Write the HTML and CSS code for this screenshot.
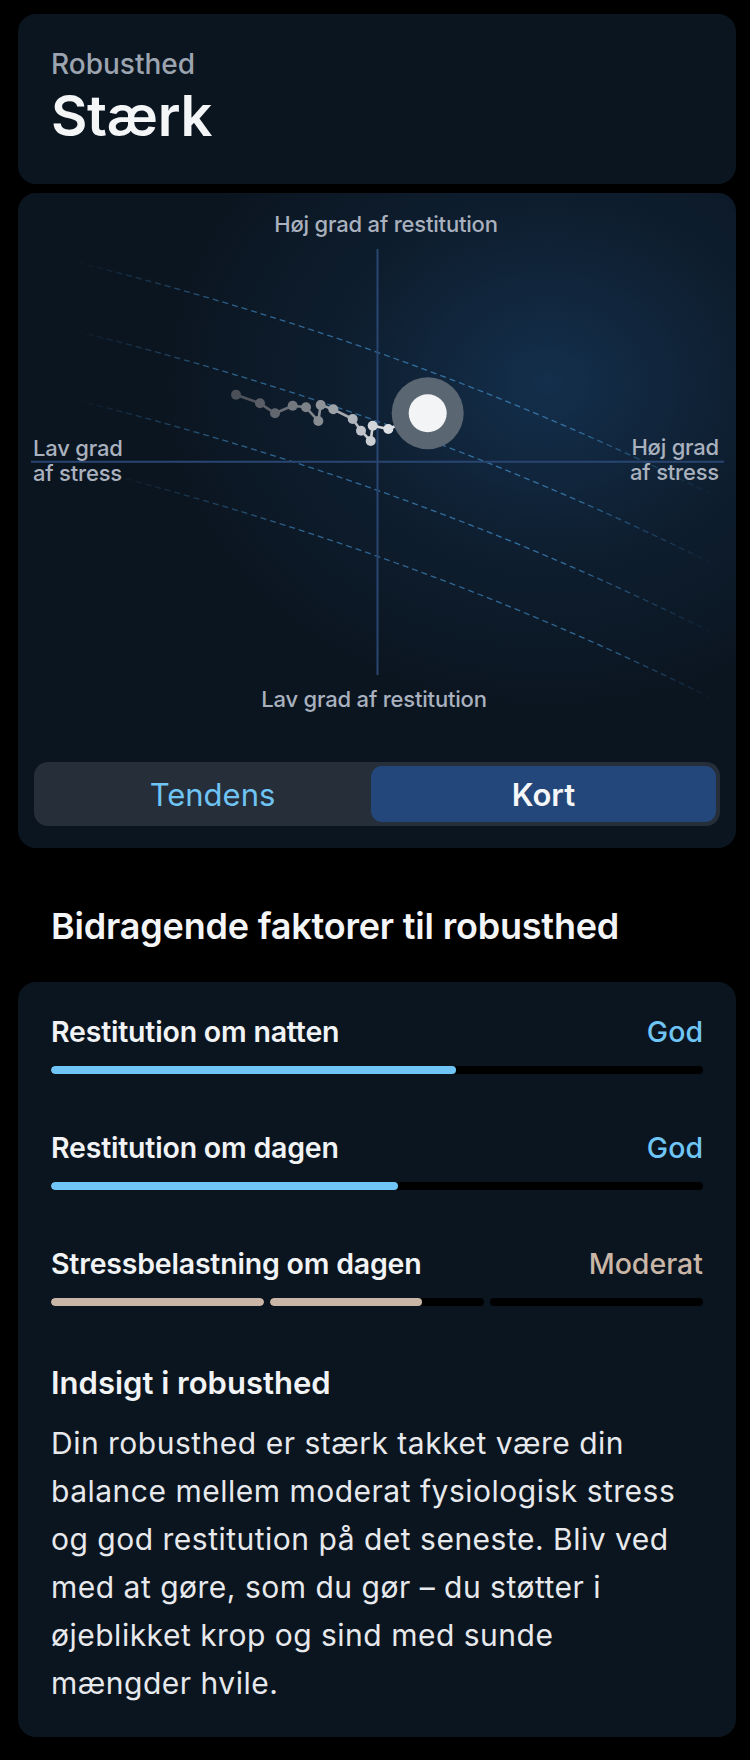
FILE: index.html
```html
<!DOCTYPE html>
<html lang="da">
<head>
<meta charset="utf-8">
<title>Robusthed</title>
<link rel="stylesheet" href="styles.css">
</head>
<body>
<main class="page">
  <section class="card summary">
    <div class="summary-label">Robusthed</div>
    <div class="summary-value">Stærk</div>
  </section>

  <section class="card chart-card">
    <div class="chart">
      <svg class="chart-svg" viewBox="0 0 718 569" width="718" height="569" aria-hidden="true">
        <defs>
          <linearGradient id="fade" gradientUnits="userSpaceOnUse" x1="55" y1="0" x2="705" y2="0">
            <stop offset="0" stop-color="#3f8ac4" stop-opacity="0"/>
            <stop offset="0.25" stop-color="#3f8ac4" stop-opacity="0.65"/>
            <stop offset="0.75" stop-color="#3f8ac4" stop-opacity="0.75"/>
            <stop offset="1" stop-color="#3f8ac4" stop-opacity="0"/>
          </linearGradient>
          <linearGradient id="fade4" gradientUnits="userSpaceOnUse" x1="95" y1="0" x2="700" y2="0">
            <stop offset="0" stop-color="#3f8ac4" stop-opacity="0"/>
            <stop offset="0.3" stop-color="#3f8ac4" stop-opacity="0.65"/>
            <stop offset="0.8" stop-color="#3f8ac4" stop-opacity="0.7"/>
            <stop offset="1" stop-color="#3f8ac4" stop-opacity="0"/>
          </linearGradient>
        </defs>
        <g fill="none" stroke-width="1.3" stroke-dasharray="6 4">
          <path stroke="url(#fade)" d="M50 67 C264 120 477 193 691 300"/>
          <path stroke="url(#fade)" d="M50 136 C264 189 477 262 691 369"/>
          <path stroke="url(#fade)" d="M50 205 C264 258 477 331 691 438"/>
          <path stroke="url(#fade4)" d="M50 271 C264 324 477 397 691 504"/>
        </g>
        <g stroke="#284671" stroke-width="2">
          <line x1="359.5" y1="56" x2="359.5" y2="482"/>
          <line x1="13" y1="268.7" x2="706" y2="268.7"/>
        </g>
        <g stroke-width="2.6" stroke-linecap="round">
          <line x1="218" y1="201.7" x2="242" y2="210.3" stroke="#4f545c"/>
          <line x1="242" y1="210.3" x2="257" y2="220.3" stroke="#5c6169"/>
          <line x1="257" y1="220.3" x2="274.7" y2="212.7" stroke="#686d75"/>
          <line x1="274.7" y1="212.7" x2="288" y2="214.3" stroke="#777c83"/>
          <line x1="288" y1="214.3" x2="300.3" y2="228" stroke="#81868d"/>
          <line x1="300.3" y1="228" x2="302.7" y2="212" stroke="#8a8f96"/>
          <line x1="302.7" y1="212" x2="315.3" y2="216.3" stroke="#959aa1"/>
          <line x1="315.3" y1="216.3" x2="334.7" y2="226" stroke="#a6abb1"/>
          <line x1="334.7" y1="226" x2="343" y2="237.7" stroke="#b7bbc1"/>
          <line x1="343" y1="237.7" x2="352.7" y2="248" stroke="#c4c8cd"/>
          <line x1="352.7" y1="248" x2="354.7" y2="232.7" stroke="#cdd0d5"/>
          <line x1="354.7" y1="232.7" x2="370.3" y2="236" stroke="#d6d9dd"/>
          <line x1="370.3" y1="236" x2="409.7" y2="220.3" stroke="#e6e8eb"/>
        </g>
        <circle cx="409.7" cy="220.3" r="36" fill="#5a6671"/>
        <circle cx="409.7" cy="220.3" r="19" fill="#f3f4f6"/>
        <g>
          <circle cx="218" cy="201.7" r="5" fill="#4b5058"/>
          <circle cx="242" cy="210.3" r="5" fill="#5a5f67"/>
          <circle cx="257" cy="220.3" r="5" fill="#62676f"/>
          <circle cx="274.7" cy="212.7" r="5" fill="#73787f"/>
          <circle cx="288" cy="214.3" r="5" fill="#7d8289"/>
          <circle cx="300.3" cy="228" r="5" fill="#878c93"/>
          <circle cx="302.7" cy="212" r="5" fill="#8e939a"/>
          <circle cx="315.3" cy="216.3" r="5" fill="#9da2a9"/>
          <circle cx="334.7" cy="226" r="5" fill="#b0b5bb"/>
          <circle cx="343" cy="237.7" r="5" fill="#bfc3c9"/>
          <circle cx="352.7" cy="248" r="5" fill="#cbcfd4"/>
          <circle cx="354.7" cy="232.7" r="5" fill="#d3d6db"/>
          <circle cx="370.3" cy="236" r="5" fill="#dde0e4"/>
        </g>
      </svg>
      <div class="axis-label axis-top">Høj grad af restitution</div>
      <div class="axis-label axis-bottom">Lav grad af restitution</div>
      <div class="axis-label axis-left">Lav grad<br>af stress</div>
      <div class="axis-label axis-right">Høj grad<br>af stress</div>
    </div>
    <div class="toggle-wrap">
      <div class="toggle">
        <div class="toggle-item toggle-trend">Tendens</div>
        <div class="toggle-item is-active">Kort</div>
      </div>
    </div>
  </section>

  <h2 class="section-title">Bidragende faktorer til robusthed</h2>

  <section class="card factors">
    <div class="factor">
      <div class="factor-head">
        <span class="factor-name">Restitution om natten</span>
        <span class="factor-status status-good">God</span>
      </div>
      <div class="bar"><div class="bar-fill" style="width:62.1%"></div></div>
    </div>
    <div class="factor">
      <div class="factor-head">
        <span class="factor-name">Restitution om dagen</span>
        <span class="factor-status status-good">God</span>
      </div>
      <div class="bar"><div class="bar-fill" style="width:53.2%"></div></div>
    </div>
    <div class="factor">
      <div class="factor-head">
        <span class="factor-name">Stressbelastning om dagen</span>
        <span class="factor-status status-moderate">Moderat</span>
      </div>
      <div class="segbar">
        <div class="seg"><div class="seg-fill" style="width:100%"></div></div>
        <div class="seg"><div class="seg-fill" style="width:71%"></div></div>
        <div class="seg"><div class="seg-fill" style="width:0%"></div></div>
      </div>
    </div>

    <h3 class="insight-title">Indsigt i robusthed</h3>
    <p class="insight-text">Din robusthed er stærk takket være din balance mellem moderat fysiologisk stress og god restitution på det seneste. Bliv ved med at gøre, som du gør – du støtter i øjeblikket krop og sind med sunde mængder hvile.</p>
  </section>
</main>
</body>
</html>
```

FILE: styles.css
```css
* {
  box-sizing: border-box;
}

html, body {
  margin: 0;
  padding: 0;
  background: #000;
}

body {
  font-family: Inter, "Noto Sans", "DejaVu Sans", sans-serif;
  color: #f2f4f6;
  -webkit-font-smoothing: antialiased;
}

.page {
  width: 750px;
  padding: 14px 14px 40px 18px;
  display: flex;
  flex-direction: column;
}

.card {
  background: #0b1520;
  border-radius: 18px;
  width: 718px;
}

/* Summary card */
.summary {
  padding: 34px 33px 38px;
  height: 170px;
}

.summary-label {
  font-size: 28px;
  line-height: 32px;
  font-weight: 500;
  color: #9ca4b0;
}

.summary-value {
  margin-top: 6px;
  font-size: 56px;
  line-height: 60px;
  font-weight: 600;
  color: #f4f5f7;
  letter-spacing: -0.3px;
}

/* Chart card */
.chart-card {
  margin-top: 9px;
  overflow: hidden;
  background:
    radial-gradient(ellipse 390px 330px at 530px 190px, rgba(22, 54, 88, 0.78), rgba(22, 54, 88, 0.25) 55%, rgba(22, 54, 88, 0) 100%),
    #0b1520;
}

.chart {
  position: relative;
  height: 569px;
}

.chart-svg {
  position: absolute;
  left: 0;
  top: 0;
  display: block;
}

.axis-label {
  position: absolute;
  font-size: 22px;
  line-height: 25px;
  font-weight: 500;
  color: #a9b1be;
  white-space: nowrap;
  letter-spacing: -0.2px;
}

.axis-top {
  left: 368px;
  top: 19px;
  transform: translateX(-50%);
}

.axis-bottom {
  left: 356px;
  top: 494px;
  transform: translateX(-50%);
}

.axis-left {
  left: 15px;
  top: 243px;
}

.axis-right {
  right: 17px;
  top: 242px;
  text-align: right;
}

.toggle-wrap {
  padding: 0 16px 22px;
}

.toggle {
  height: 64px;
  background: #262e39;
  border-radius: 14px;
  padding: 4px;
  display: grid;
  grid-template-columns: 1fr 345px;
}

.toggle-item {
  display: flex;
  align-items: center;
  justify-content: center;
  font-size: 31px;
  font-weight: 400;
  color: #6fc4f4;
  border-radius: 11px;
}

.toggle-trend {
  padding-left: 16px;
}

.toggle-item.is-active {
  background: #23477a;
  color: #f5f6f8;
  font-weight: 600;
}

/* Section title */
.section-title {
  margin: 58px 0 0;
  padding-left: 33px;
  font-size: 36px;
  line-height: 40px;
  font-weight: 600;
  color: #f4f5f7;
  letter-spacing: -0.2px;
}

/* Factors card */
.factors {
  margin-top: 36px;
  padding: 34px 33px 30px;
}

.factor-head {
  display: flex;
  justify-content: space-between;
  align-items: baseline;
  font-size: 28.5px;
  line-height: 32px;
}

.factor-name {
  font-weight: 600;
  color: #f1f3f5;
  letter-spacing: -0.2px;
}

.factor-status {
  font-weight: 500;
}

.status-good {
  color: #6fc6f6;
}

.status-moderate {
  color: #c9b6a6;
}

.bar {
  margin-top: 18px;
  height: 8px;
  border-radius: 4px;
  background: #000;
  overflow: hidden;
}

.bar-fill {
  height: 100%;
  border-radius: 4px;
  background: #6fc6f6;
}

.factor + .factor {
  margin-top: 58px;
}

.segbar {
  margin-top: 18px;
  display: grid;
  grid-template-columns: 1fr 1fr 1fr;
  gap: 6px;
}

.seg {
  height: 8px;
  border-radius: 4px;
  background: #000;
  overflow: hidden;
}

.seg-fill {
  height: 100%;
  border-radius: 4px;
  background: #c9b6a6;
}

.insight-title {
  margin: 61px 0 0;
  font-size: 31px;
  line-height: 32px;
  font-weight: 600;
  color: #f1f3f5;
}

.insight-text {
  margin: 20px 0 0;
  max-width: 642px;
  font-size: 30px;
  line-height: 48px;
  font-weight: 400;
  letter-spacing: 0.5px;
  color: #e7e9ec;
}
```
